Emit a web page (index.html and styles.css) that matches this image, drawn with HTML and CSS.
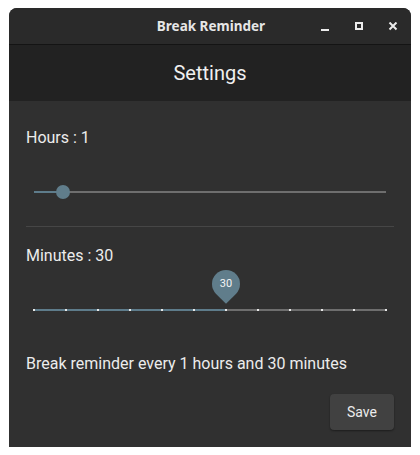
FILE: index.html
```html
<!DOCTYPE html>
<html>
<head>
<meta charset="utf-8">
<link rel="stylesheet" href="styles.css">
</head>
<body>
<div class="window">
  <div class="titlebar">
    <div class="title">Break Reminder</div>
    <div class="controls">
      <span class="ctl"><svg width="10" height="10" viewBox="0 0 10 10"><rect x="1" y="7" width="8" height="2" fill="#ececec"/></svg></span>
      <span class="ctl"><svg width="10" height="10" viewBox="0 0 10 10"><rect x="2" y="1" width="6" height="6" fill="none" stroke="#ececec" stroke-width="2"/></svg></span>
      <span class="ctl"><svg width="10" height="10" viewBox="0 0 10 10"><path d="M1.5 0.5 L8.5 7.5 M8.5 0.5 L1.5 7.5" stroke="#ececec" stroke-width="2"/></svg></span>
    </div>
  </div>
  <div class="header">Settings</div>
  <div class="content">
    <div class="label">Hours : 1</div>
    <div class="slider slider-first">
      <div class="track">
        <div class="active" style="width:8.333%"></div>
        <div class="rest"></div>
      </div>
      <div class="thumb" style="left:8.333%"></div>
    </div>
    <div class="divider"></div>
    <div class="label label-second">Minutes : 30</div>
    <div class="slider">
      <div class="track">
        <div class="active" style="width:54.545%"></div>
        <div class="rest"></div>
      </div>
      <div class="ticks">
        <span></span><span></span><span></span><span></span><span></span><span></span>
        <span></span><span></span><span></span><span></span><span></span><span></span>
      </div>
      <div class="balloon" style="left:54.545%">
        <div class="drop"></div>
        <div class="bval">30</div>
      </div>
    </div>
    <div class="summary">Break reminder every 1 hours and 30 minutes</div>
    <div class="actions">
      <button class="save">Save</button>
    </div>
  </div>
</div>
</body>
</html>
```

FILE: styles.css
```css
html, body {
  margin: 0;
  padding: 0;
  background: #ffffff;
}
body {
  padding: 8px 9px;
}
.window {
  width: 402px;
  height: 439px;
  background: #303030;
  border-radius: 8px 8px 0 0;
  overflow: hidden;
  display: flex;
  flex-direction: column;
  font-family: Roboto, "Noto Sans", sans-serif;
  color: #ececec;
}
.titlebar {
  height: 36px;
  background: #2a2a2a;
  border-bottom: 1px solid #141414;
  position: relative;
  display: flex;
  align-items: center;
  justify-content: center;
}
.title {
  font-family: "Noto Sans", "DejaVu Sans", sans-serif;
  font-weight: bold;
  font-size: 13.5px;
  color: #e6e6e6;
  margin-left: 2px;
}
.controls {
  position: absolute;
  right: 13px;
  top: 14px;
  display: flex;
  gap: 24px;
}
.ctl {
  width: 10px;
  height: 10px;
  display: block;
}
.ctl svg {
  display: block;
}
.header {
  height: 56px;
  background: #222222;
  display: flex;
  align-items: center;
  justify-content: center;
  font-size: 20px;
  color: #f0f0f0;
}
.content {
  flex: 1;
  padding: 27px 17px 0 17px;
  display: flex;
  flex-direction: column;
}
.label {
  font-size: 16px;
  line-height: 19px;
  height: 19px;
  color: #ececec;
}
.label-second {
  margin-top: 19px;
}
.slider {
  position: relative;
  height: 30px;
  margin: 30px 8px 0 8px;
  display: flex;
  align-items: center;
}
.track {
  width: 100%;
  height: 2px;
  display: flex;
}
.active {
  background: #5e7c8b;
  height: 2px;
}
.rest {
  flex: 1;
  background: #6e6e6e;
  height: 2px;
}
.thumb {
  position: absolute;
  top: 8px;
  width: 14px;
  height: 14px;
  margin-left: -7px;
  border-radius: 50%;
  background: #607d8b;
}
.ticks {
  position: absolute;
  left: -1px;
  right: -1px;
  top: 14px;
  height: 2px;
  display: flex;
  justify-content: space-between;
}
.ticks span {
  width: 2px;
  height: 2px;
  background: #e8e8e8;
}
.balloon {
  position: absolute;
  top: -25px;
  width: 28px;
  height: 28px;
  margin-left: -14px;
}
.drop {
  position: absolute;
  inset: 0;
  background: #607d8b;
  border-radius: 50% 50% 50% 0;
  transform: rotate(-45deg);
}
.bval {
  position: relative;
  text-align: center;
  line-height: 28px;
  font-size: 11px;
  color: #f4f4f4;
}
.divider {
  height: 1px;
  background: #464646;
  margin-top: 19px;
}
.summary {
  margin-top: 29px;
  font-size: 16px;
  line-height: 19px;
  color: #ececec;
}
.actions {
  margin-top: 21px;
  display: flex;
  justify-content: flex-end;
}
.save {
  width: 64px;
  height: 36px;
  border: none;
  border-radius: 4px;
  background: #414141;
  color: #ececec;
  font-family: Roboto, "Noto Sans", sans-serif;
  font-size: 14px;
  box-shadow: 0 1px 2px rgba(0,0,0,0.4);
  padding: 0;
}
```
